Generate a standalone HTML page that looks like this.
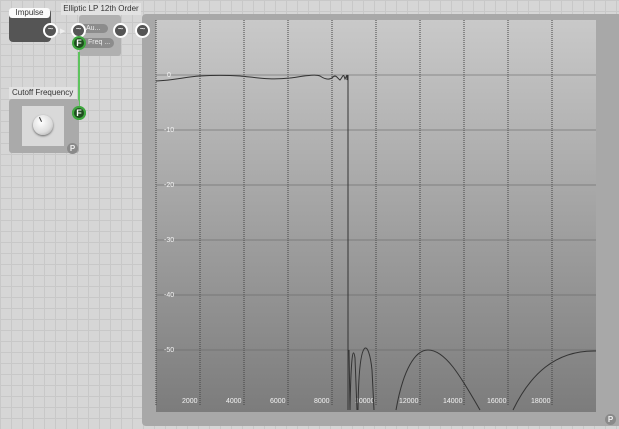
<!DOCTYPE html>
<html><head><meta charset="utf-8"><style>
html,body{margin:0;padding:0}
body{width:619px;height:429px;overflow:hidden;position:relative;font-family:"Liberation Sans",sans-serif;
background-color:#d6d6d6;
background-image:linear-gradient(#c8c8c8 1px,transparent 1px),linear-gradient(90deg,#c8c8c8 1px,transparent 1px);
background-size:11px 11px;}
.abs{position:absolute}
.port{position:absolute;width:15px;height:15px;border-radius:50%;background:#555;border:2px solid #fff;box-sizing:border-box;color:#fff;font-size:10px;text-align:center;line-height:10px;z-index:5}
.fport{position:absolute;width:14px;height:14px;border-radius:50%;background:#1f4d1f;border:2px solid #3fa83f;box-sizing:border-box;color:#fff;font-size:9px;font-weight:bold;text-align:center;line-height:10px;z-index:5}
.pb{position:absolute;width:11px;height:11px;border-radius:50%;background:#8a8a8a;color:#eee;font-size:8px;font-weight:bold;text-align:center;line-height:11px;z-index:5}
</style></head><body>
<!-- Plot panel -->
<div class="abs" style="left:142px;top:14px;width:480px;height:412px;background:#a8a8a8;border-radius:4px"></div>
<div class="pb" style="left:605px;top:414px">P</div>
<svg class="abs" style="left:0;top:0" width="619" height="429">
<defs><linearGradient id="g" x1="0" y1="0" x2="0" y2="1"><stop offset="0" stop-color="#c9c9c9"/><stop offset="1" stop-color="#7c7c7c"/></linearGradient></defs>
<rect x="156" y="20" width="440" height="392" fill="url(#g)"/>
<g stroke="#444" stroke-width="1" stroke-dasharray="1,1">
<line x1="156" y1="20" x2="156" y2="406"/><line x1="200" y1="20" x2="200" y2="406"/><line x1="244" y1="20" x2="244" y2="406"/><line x1="288" y1="20" x2="288" y2="406"/><line x1="332" y1="20" x2="332" y2="406"/><line x1="376" y1="20" x2="376" y2="406"/><line x1="420" y1="20" x2="420" y2="406"/><line x1="464" y1="20" x2="464" y2="406"/><line x1="508" y1="20" x2="508" y2="406"/><line x1="552" y1="20" x2="552" y2="406"/>
</g>
<g stroke="#666" stroke-width="1" opacity="0.6">
<line x1="156" y1="75" x2="596" y2="75"/><line x1="156" y1="130" x2="596" y2="130"/><line x1="156" y1="185" x2="596" y2="185"/><line x1="156" y1="240" x2="596" y2="240"/><line x1="156" y1="295" x2="596" y2="295"/><line x1="156" y1="350" x2="596" y2="350"/>
</g>
<g fill="#f4f4f4" font-size="7" font-family="Liberation Sans,sans-serif">
<text x="167" y="77">0</text><text x="164" y="132">-10</text><text x="164" y="187">-20</text><text x="164" y="242">-30</text><text x="164" y="297">-40</text><text x="164" y="352">-50</text>
<text x="182" y="403">2000</text><text x="226" y="403">4000</text><text x="270" y="403">6000</text><text x="314" y="403">8000</text><text x="355" y="403">10000</text><text x="399" y="403">12000</text><text x="443" y="403">14000</text><text x="487" y="403">16000</text><text x="531" y="403">18000</text>
</g>
<path fill="none" stroke="#333" stroke-width="1" d="M156,81 C175,80 185,77 200,76 C215,75 225,75 240,76 C260,78 270,80 290,78 C305,76 315,74 320,76 C326,80 330,80 333,77 C336,74 338,79 340,80 C342,78 343,74 344,76 L345,79 L347,75 L347,80 L348,75 L348,410 M349,350 L350,410 M350,410 C351,355 353,345 355,358 L357,410 M358,410 C359,330 369,340 372,370 L374,410 M396,410 C403,370 415,350 428,350 C445,350 460,375 480,410 M513,410 C530,375 555,350 596,351"/>
</svg>
<!-- Impulse -->
<div class="abs" style="left:9px;top:9px;width:42px;height:33px;background:#555;border-radius:4px"></div>
<div class="abs" style="left:9px;top:8px;width:41px;height:10px;background:#fafafa;border-radius:3px;font-size:8px;line-height:10px;text-align:center;color:#333">Impulse</div>
<!-- Elliptic node -->
<div class="abs" style="left:61px;top:3px;width:80px;height:12px;background:#e2e2e2;font-size:8px;line-height:12px;text-align:center;color:#333">Elliptic LP 12th Order</div>
<div class="abs" style="left:79px;top:15px;width:42px;height:41px;background:#b0b0b0;border-radius:3px"></div>
<div class="abs" style="left:80px;top:24px;width:28px;height:9px;background:#8c8c8c;border-radius:5px;color:#eee;font-size:7px;line-height:9px;padding-left:6px;box-sizing:border-box">Au...</div>
<div class="abs" style="left:80px;top:38px;width:34px;height:10px;background:#8c8c8c;border-radius:5px;color:#eee;font-size:7px;line-height:10px;padding-left:8px;box-sizing:border-box">Freq ...</div>
<div class="port" style="left:43px;top:23px">~</div>
<div class="abs" style="left:60px;top:27px;color:#eee;font-size:7px">▶</div>
<div class="port" style="left:71px;top:23px">~</div>
<div class="port" style="left:113px;top:23px">~</div>
<div class="port" style="left:135px;top:23px">~</div>
<div class="abs" style="left:78px;top:52px;width:2px;height:56px;background:#5ec35e"></div>
<div class="fport" style="left:72px;top:36px">F</div>
<div class="fport" style="left:72px;top:106px">F</div>
<!-- Cutoff -->
<div class="abs" style="left:9px;top:87px;width:68px;height:12px;background:#e2e2e2;font-size:8px;line-height:12px;padding-left:3px;box-sizing:border-box;color:#333">Cutoff Frequency</div>
<div class="abs" style="left:9px;top:99px;width:70px;height:54px;background:#aaa;border-radius:3px"></div>
<div class="abs" style="left:22px;top:106px;width:42px;height:40px;background:#d9d9d9"></div>
<div class="abs" style="left:33px;top:115px;width:20px;height:20px;border-radius:50%;background:radial-gradient(circle at 40% 35%,#fff,#ddd 60%,#999);box-shadow:0 1px 2px #666"></div>
<div class="abs" style="left:40px;top:117px;width:1px;height:5px;background:#333;transform:rotate(-25deg)"></div>
<div class="pb" style="left:67px;top:143px">P</div>
<div class="fport" style="left:72px;top:106px">F</div>
</body></html>
